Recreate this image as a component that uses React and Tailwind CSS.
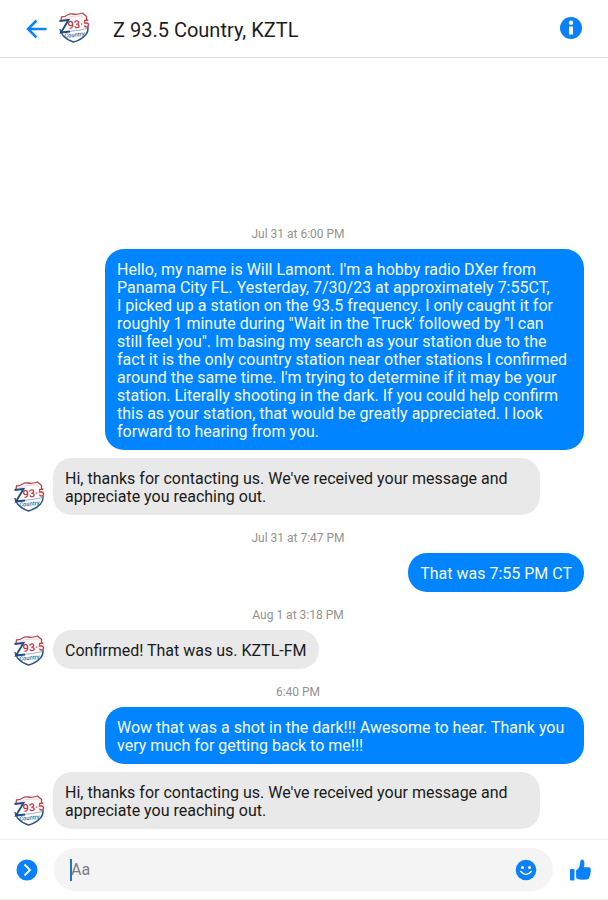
const STATION = 'Z 93.5 Country, KZTL'

const AUTO_REPLY = "Hi, thanks for contacting us. We've received your message and\nappreciate you reaching out."

const INTRO = [
    "Hello, my name is Will Lamont. I'm a hobby radio DXer from",
    'Panama City FL. Yesterday, 7/30/23 at approximately 7:55CT,',
    'I picked up a station on the 93.5 frequency. I only caught it for',
    'roughly 1 minute during "Wait in the Truck\' followed by "I can',
    'still feel you". Im basing my search as your station due to the',
    'fact it is the only country station near other stations I confirmed',
    "around the same time. I'm trying to determine if it may be your",
    'station. Literally shooting in the dark. If you could help confirm',
    'this as your station, that would be greatly appreciated. I look',
    'forward to hearing from you.',
].join('\n')

/* ── Conversation, grouped by timestamp ── */
const THREAD = [
    {
        time: 'Jul 31 at 6:00 PM',
        messages: [
            { from: 'me', text: INTRO },
            { from: 'station', text: AUTO_REPLY },
        ],
    },
    { time: 'Jul 31 at 7:47 PM', messages: [{ from: 'me', text: 'That was 7:55 PM CT' }] },
    { time: 'Aug 1 at 3:18 PM', messages: [{ from: 'station', text: 'Confirmed! That was us. KZTL-FM' }] },
    {
        time: '6:40 PM',
        messages: [
            { from: 'me', text: 'Wow that was a shot in the dark!!! Awesome to hear. Thank you\nvery much for getting back to me!!!' },
            { from: 'station', text: AUTO_REPLY },
        ],
    },
]

/* ── Station shield logo ── */
function StationLogo() {
    return (
        <svg viewBox="0 0 33 33" className="mb-0.5 h-[33px] w-[33px] shrink-0" aria-hidden="true">
            <path
                d="M5 6 Q9 6 12 3.500 Q15 2.500 18 3 Q22 3 26 2 L30 6 Q29.500 9 31 13 Q33 20 29 25 Q25 29 17.500 31.500 Q9 29 5.500 24 Q2 19 4 13 Z"
                fill="#fff"
            />
            <path d="M4 9.500 L4.500 6 Q8 6 10.500 4 Q13 2.500 16 3 Q20 4 25.500 2 L29.500 5.500 Q29 8 30.500 10" fill="none" stroke="#b8444c" strokeWidth="1.300" />
            <path d="M7 8 Q11 7.500 13 5.800 Q18 5 24 5 L27 6.500" fill="none" stroke="#e3b0b3" strokeWidth=".6" />
            <path d="M3 18 Q3 21 6 24.500 Q10 29 16.500 31 Q24 29 28.500 24 Q31.500 20.500 31 16" fill="none" stroke="#2b568c" strokeWidth="1.400" />
            <path d="M13 20.300 Q21 19.800 30 17.500" fill="none" stroke="#7d9fc7" strokeWidth=".8" />
            <path d="M2.500 10 L11.500 9 L4 21.500 L13 20.500" fill="none" stroke="#204a80" strokeWidth="1.900" />
            <text x="11" y="18" transform="rotate(-5 11 18)" fill="#c42c39" fontFamily="Roboto, sans-serif" fontWeight="500" fontSize="11">93·5</text>
            <text x="7.500" y="27" transform="rotate(-7 8 27)" fill="#31659b" fontFamily="Roboto, sans-serif" fontWeight="500" fontStyle="italic" fontSize="6">Country</text>
        </svg>
    )
}

function Header() {
    return (
        <header className="flex h-[58px] shrink-0 items-center border-b border-[#dcdcdc] pl-6 pr-[25px]">
            <button type="button" aria-label="Back" className="shrink-0">
                <svg viewBox="0 0 24 24" className="h-6 w-6" fill="none" stroke="#0a84ff" strokeWidth="2.500">
                    <path d="M22.500 12H4.500M12.500 3.500L4 12l8.500 8.500" />
                </svg>
            </button>
            <div className="ml-[9px] flex">
                <StationLogo />
            </div>
            <h1 className="ml-[23px] flex-1 truncate pt-0.5 text-xl text-[#1c1c1c]">{STATION}</h1>
            <button type="button" aria-label="Conversation info" className="shrink-0">
                <svg viewBox="0 0 24 24" className="h-6 w-6">
                    <circle cx="12" cy="11" r="11" fill="#0a80fb" />
                    <circle cx="12" cy="5.800" r="2.200" fill="#fff" />
                    <path d="M10 9.500h4v8h-4z" fill="#fff" />
                </svg>
            </button>
        </header>
    )
}

/* ── One bubble, with the avatar beside incoming ones ── */
function Message({ from, text }) {
    // bubbles with more than one line take the full width of their side
    const grow = text.includes('\n') ? 'flex-1' : ''

    if (from === 'me') {
        return (
            <div className="flex justify-end pl-[93px]">
                <p className={`${grow} rounded-[19px] bg-[#0084ff] px-3 pb-[9px] pt-3 text-base leading-[18px] whitespace-pre-line text-[#f4faff]`}>
                    {text}
                </p>
            </div>
        )
    }
    return (
        <div className="flex items-end gap-2 pr-11">
            <StationLogo />
            <p className={`${grow} rounded-[19px] bg-[#e9e9e9] px-3 pb-[9px] pt-3 text-base leading-[18px] whitespace-pre-line text-[#1a1a1a]`}>
                {text}
            </p>
        </div>
    )
}

function Composer() {
    return (
        <footer className="flex h-[61px] shrink-0 items-center border-y border-[#f0f0f0] pl-4 pr-4">
            <button type="button" aria-label="More actions" className="shrink-0">
                <svg viewBox="0 0 22 22" className="h-[22px] w-[22px]">
                    <circle cx="11" cy="11" r="10.500" fill="#0a80fb" />
                    <path d="M8.500 5.500L14 11l-5.500 5.500" fill="none" stroke="#fff" strokeWidth="1.800" />
                </svg>
            </button>
            <div className="ml-4 flex h-[43px] flex-1 items-center rounded-full bg-[#f4f4f4] pl-4 pr-4">
                <span className="h-[22px] w-0.5 bg-[#1a76cf]" aria-hidden="true" />
                <input
                    type="text"
                    aria-label="Message"
                    placeholder="Aa"
                    className="-ml-px min-w-0 flex-1 bg-transparent text-base text-[#1a1a1a] outline-none placeholder:text-[#7d7d7d]"
                />
                <button type="button" aria-label="Choose an emoji" className="shrink-0">
                    <svg viewBox="0 0 22 22" className="h-[22px] w-[22px]">
                        <circle cx="11" cy="11" r="10.300" fill="#0a80fb" />
                        <circle cx="7.500" cy="8.500" r="1.500" fill="#fff" />
                        <circle cx="14.500" cy="8.500" r="1.500" fill="#fff" />
                        <path d="M5.800 12.500q5.200 6 10.400 0" fill="none" stroke="#fff" strokeWidth="1.500" strokeLinecap="round" />
                    </svg>
                </button>
            </div>
            <button type="button" aria-label="Send a like" className="ml-4 shrink-0">
                <svg viewBox="0 0 23 24" className="h-6 w-[23px]" fill="#0a80fb">
                    <rect x="1" y="11" width="4.500" height="11.500" rx="1" />
                    <path d="M7 12.500q4-3 4.200-7.500 0-3.500 1.800-3.500 2.500.3 2.400 4 0 2-.7 3.800h5.300q2.300.5 1.500 3 .9 1.500-.2 3 .6 1.800-.8 3 .2 2-1.300 2.800-1 .7-5 .7-4.500 0-7-1.500z" />
                </svg>
            </button>
        </footer>
    )
}

export default function App() {
    return (
        <div className="flex min-h-screen flex-col bg-white font-['Roboto',sans-serif]">
            <Header />

            <main className="flex flex-1 flex-col justify-end pb-[10px] pl-3 pr-6">
                {THREAD.map((group) => (
                    <section key={group.time}>
                        <div className="flex h-[38px] items-center justify-center pt-2">
                            <time className="text-xs leading-4 text-[#929292]">{group.time}</time>
                        </div>
                        <div className="flex flex-col gap-2">
                            {group.messages.map((message) => (
                                <Message key={message.text} {...message} />
                            ))}
                        </div>
                    </section>
                ))}
            </main>

            <Composer />
        </div>
    )
}
